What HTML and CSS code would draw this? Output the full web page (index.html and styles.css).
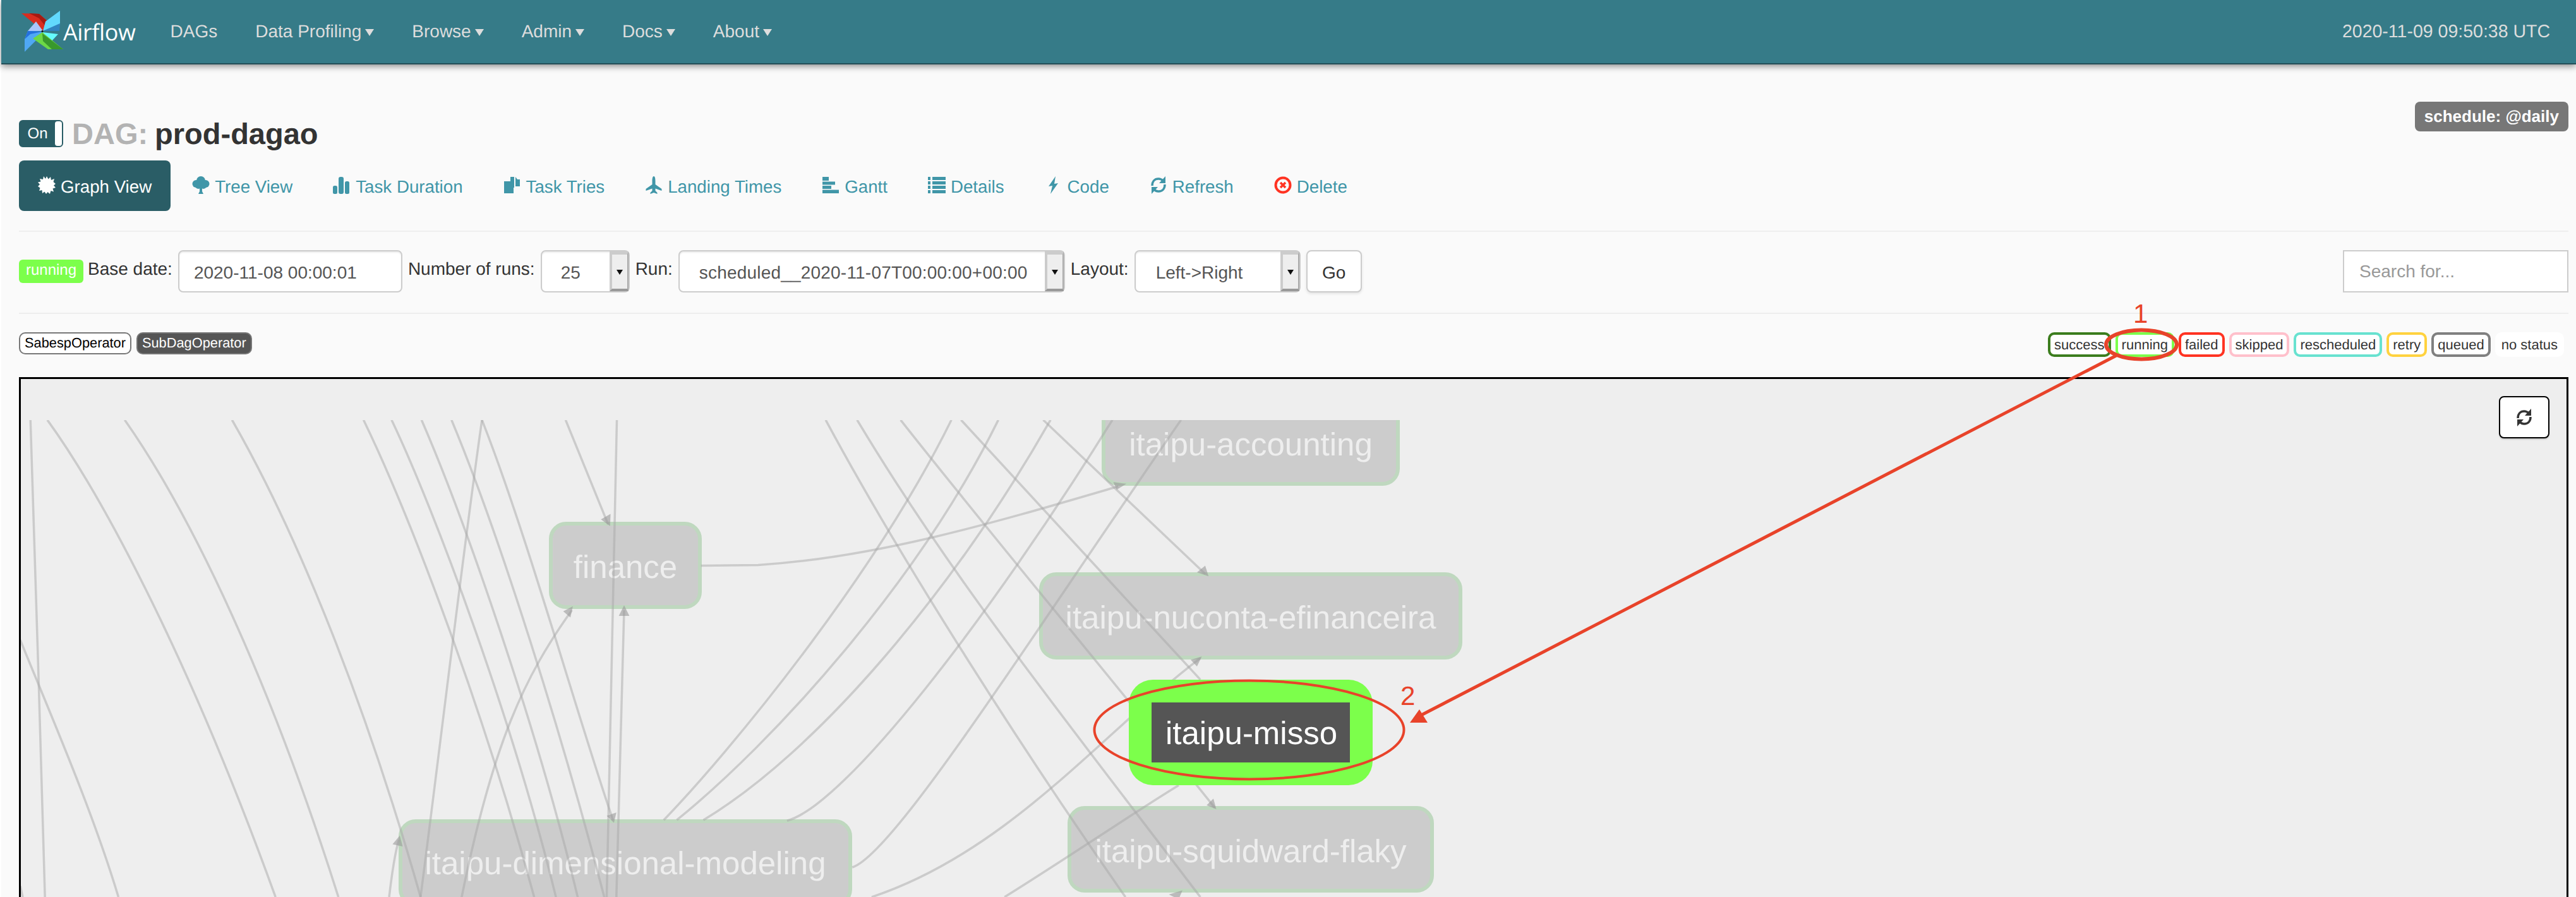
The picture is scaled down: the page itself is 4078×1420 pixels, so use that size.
FILE: index.html
```html
<!DOCTYPE html>
<html lang="en">
<head>
    <meta charset="UTF-8">
    <title>Airflow - prod-dagao</title>
    <link rel="stylesheet" href="styles.css">
</head>
<body>

    <div class="navbar">
        <a class="brand">
            <svg class="logo" viewBox="30 15 72 72">
                <polygon class="b-red" points="32,22 60,23 81,41 66,50"/>
                <polygon class="b-red-dark" points="44,22 60,23 78,39 72,45 60,30"/>
                <polygon class="b-lav" points="55,35 66,50 42,50"/>
                <polygon class="b-blue" points="66,51 42,50 37,63 37,83 55,65"/>
                <polygon class="b-blue-dark" points="65,51 42,50 37,63 46,55"/>
                <polygon class="b-cyan" points="93,18 93,40 66,50 70,35"/>
                <polygon class="b-teal" points="66,50 93,38 92,50 80,50"/>
                <polygon class="b-aqua" points="65,52 90,55 78,68"/>
                <polygon class="b-green" points="50,62 65,52 98,79 74,79"/>
                <polygon class="b-green-dark" points="65,54 98,79 80,79 66,66"/>
                <circle class="b-hub" cx="65" cy="50.500" r="1.500"/>
            </svg>
            <span class="brand-name">Airflow</span>
        </a>
        <ul class="nav-links">
            <li>DAGs</li>
            <li>Data Profiling<span class="caret"></span></li>
            <li>Browse<span class="caret"></span></li>
            <li>Admin<span class="caret"></span></li>
            <li>Docs<span class="caret"></span></li>
            <li>About<span class="caret"></span></li>
        </ul>
        <span class="nav-time">2020-11-09 09:50:38 UTC</span>
    </div>

    <div class="container">
        <div class="title-row">
            <div class="title">
                <span class="toggle"><span class="toggle-on">On</span><span class="toggle-knob"></span></span>
                <span class="title-dag">DAG:</span>
                <span class="title-name">prod-dagao</span>
            </div>
            <span class="schedule">schedule: @daily</span>
        </div>

        <ul class="tabs">
            <li class="tab active">
                <svg class="icon" viewBox="0 0 28 28"><polygon points="14,0 16.500,4.500 20,1 21,6 26,4 24.500,9 28,12 25,14.500 28,18 23.500,19.500 25,24.500 20.500,23 19,28 15.500,25 13,28 10.500,24.500 7,27 6.500,22 2,23 3.500,18.500 0,16 3,13 0,9.500 4.500,8.500 3,4 8,5 9,0 12,4"/></svg>
                Graph View
            </li>
            <li class="tab">
                <svg class="icon" viewBox="0 0 28 28"><circle cx="14" cy="7" r="7"/><circle cx="6.500" cy="12" r="6"/><circle cx="21.500" cy="12" r="6"/><circle cx="10" cy="15" r="5"/><circle cx="18" cy="15" r="5"/><path d="M12 16h4v8l2 4h-8l2-4z"/></svg>
                Tree View
            </li>
            <li class="tab">
                <svg class="icon" viewBox="0 0 28 28"><rect x="0" y="15" width="7" height="13" rx="2.500"/><rect x="9" y="1" width="8" height="27" rx="3"/><rect x="19" y="8" width="7" height="20" rx="2.500"/></svg>
                Task Duration
            </li>
            <li class="tab">
                <svg class="icon" viewBox="0 0 28 28"><path d="M1 8h10V1h6v17h-1v9H1zM19 1l3 4h4v11h-7z"/><path class="icon-cut" d="M17 18h2v2h-2z"/></svg>
                Task Tries
            </li>
            <li class="tab">
                <svg class="icon" viewBox="0 0 28 28"><path d="M14 0c2 0 2.500 4 2.500 8v5l10 7v3l-10-3.500V23l3 3v2l-5.500-2-5.500 2v-2l3-3v-3.500L1.500 23v-3l10-7V8c0-4 .5-8 2.500-8z"/></svg>
                Landing Times
            </li>
            <li class="tab">
                <svg class="icon" viewBox="0 0 28 28"><path d="M1 1h10v6H1zM1 8.500h20v5H1zM1 15h14v5H1zM1 21.500h26V27H1z"/></svg>
                Gantt
            </li>
            <li class="tab">
                <svg class="icon" viewBox="0 0 28 28"><path d="M0 1h4v5H0zM7 1h21v5H7zM0 8h4v5H0zM7 8h21v5H7zM0 15h4v5H0zM7 15h21v5H7zM0 22h4v5H0zM7 22h21v5H7z"/></svg>
                Details
            </li>
            <li class="tab">
                <svg class="icon" viewBox="0 0 28 28"><path d="M17 0l-2 12 6-1-12 17 3-13-6 1z"/></svg>
                Code
            </li>
            <li class="tab">
                <svg class="icon" viewBox="0 0 28 28"><path class="icon-line" d="M4 15c0-7 4-11 10-11 3 0 5 1 7 3M24 13c0 7-4 11-10 11-3 0-5-1-7-3"/><path d="M25 0v11h-10zM3 28V17h10z"/></svg>
                Refresh
            </li>
            <li class="tab">
                <svg class="icon icon-red" viewBox="0 0 28 28"><circle class="icon-ring" cx="14" cy="14" r="11.500"/><path class="icon-x" d="M10 10l8 8M18 10l-8 8"/></svg>
                Delete
            </li>
        </ul>

        <hr class="rule">

        <form class="run-form">
            <span class="state-badge">running</span>
            <label class="field-label">Base date:</label>
            <input class="field field-date" type="text" value="2020-11-08 00:00:01">
            <label class="field-label">Number of runs:</label>
            <div class="field select select-runs"><span class="select-val">25</span><span class="select-btn"></span></div>
            <label class="field-label">Run:</label>
            <div class="field select select-run"><span class="select-val">scheduled__2020-11-07T00:00:00+00:00</span><span class="select-btn"></span></div>
            <label class="field-label">Layout:</label>
            <div class="field select select-layout"><span class="select-val">Left-&gt;Right</span><span class="select-btn"></span></div>
            <button class="go-btn" type="button">Go</button>
            <input class="search" type="text" placeholder="Search for...">
        </form>

        <hr class="rule">

        <div class="legend-row">
            <div class="ops">
                <span class="op">SabespOperator</span>
                <span class="op op-dark">SubDagOperator</span>
            </div>
            <div class="states">
                <span class="st st-success">success</span>
                <span class="st st-running">running</span>
                <span class="st st-failed">failed</span>
                <span class="st st-skipped">skipped</span>
                <span class="st st-rescheduled">rescheduled</span>
                <span class="st st-retry">retry</span>
                <span class="st st-queued">queued</span>
                <span class="st st-none">no status</span>
            </div>
        </div>

        <div class="graph-box">
            <button class="graph-refresh" type="button">
                <svg class="icon-dark" viewBox="0 0 28 28"><path class="icon-line" d="M4 15c0-7 4-11 10-11 3 0 5 1 7 3M24 13c0 7-4 11-10 11-3 0-5-1-7-3"/><path d="M25 0v11h-10zM3 28V17h10z"/></svg>
            </button>
            <svg class="graph" viewBox="33 665 4030 755">
                <!-- task nodes -->
                <rect class="node" x="872" y="829" width="236" height="132" rx="24"/>
                <text class="node-label" x="990" y="915">finance</text>
                <rect class="node" x="634" y="1300" width="712" height="132" rx="24"/>
                <text class="node-label" x="990" y="1384">itaipu-dimensional-modeling</text>
                <rect class="node" x="1747" y="634" width="466" height="132" rx="24"/>
                <text class="node-label" x="1980" y="721">itaipu-accounting</text>
                <rect class="node" x="1648" y="909" width="664" height="132" rx="24"/>
                <text class="node-label" x="1980" y="995">itaipu-nuconta-efinanceira</text>
                <rect class="node" x="1693" y="1279" width="574" height="131" rx="24"/>
                <text class="node-label" x="1980" y="1365">itaipu-squidward-flaky</text>

                <!-- edges, left half -->
                <g transform="translate(0 600) scale(.7653 .523)">
                    <path class="edge" d="M63 124L80 915 93 1568"/>
                    <path class="edge" d="M98 124C200 330 380 800 570 1568"/>
                    <path class="edge" d="M258 124C400 420 560 920 700 1568"/>
                    <path class="edge" d="M480 124C620 480 760 1000 870 1568"/>
                    <path class="edge" d="M752 124C850 420 1000 1000 1105 1568"/>
                    <path class="edge" d="M810 124C900 400 1060 1030 1150 1568"/>
                    <path class="edge" d="M872 124C960 420 1110 1050 1195 1568"/>
                    <path class="edge" d="M934 124C1030 460 1160 1060 1250 1568"/>
                    <path class="edge" d="M997 124C1090 470 1190 1000 1268 1335"/>
                    <path class="edge" d="M997 124C960 500 920 1000 870 1568"/>
                    <path class="edge" d="M1170 124L1258 440"/>
                    <path class="edge" d="M1276 124L1255 1568"/>
                    <path class="edge" d="M1291 700L1275 1568"/>
                    <path class="edge" d="M1183 700C1085 900 1020 1100 955 1568"/>
                    <path class="edge" d="M805 1568C812 1480 818 1430 825 1395"/>
                    <path class="edge" d="M42 790C100 1000 190 1300 245 1568"/>
                    <path class="edge" d="M42 1535L47 1568"/>
                    <polygon class="arrow" points="1262,445 1243,425 1263,408"/>
                    <polygon class="arrow" points="1291,685 1280,717 1302,717"/>
                    <polygon class="arrow" points="1185,688 1165,703 1180,722"/>
                    <polygon class="arrow" points="827,1382 812,1408 833,1415"/>
                    <polygon class="arrow" points="1270,1343 1255,1322 1275,1312"/>
                </g>

                <!-- edges, right half -->
                <g transform="translate(1200 600) scale(.7653 .523)">
                    <path class="edge" d="M-118 565L0 563C250 540 500 430 745 325"/>
                    <path class="edge" d="M-195 1335C-60 1130 240 600 400 124"/>
                    <path class="edge" d="M-168 1335C30 1100 330 620 497 124"/>
                    <path class="edge" d="M-113 1335C120 1130 400 650 605 124"/>
                    <path class="edge" d="M60 1337C180 1290 480 720 733 124"/>
                    <path class="edge" d="M195 1478C280 1440 560 790 875 124"/>
                    <path class="edge" d="M235 1568C520 1430 720 1060 915 845"/>
                    <path class="edge" d="M510 1568C650 1440 780 1310 870 1230"/>
                    <path class="edge" d="M140 124C300 560 560 1150 760 1568"/>
                    <path class="edge" d="M205 124C400 600 620 1000 915 1568"/>
                    <path class="edge" d="M295 124C470 450 700 850 945 1298"/>
                    <path class="edge" d="M420 124L915 910"/>
                    <path class="edge" d="M590 124L925 590"/>
                    <polygon class="arrow" points="762,317 735,312 742,335"/>
                    <polygon class="arrow" points="932,597 908,585 925,565"/>
                    <polygon class="arrow" points="918,840 895,850 908,870"/>
                    <polygon class="arrow" points="948,1302 928,1290 942,1270"/>
                    <polygon class="arrow" points="878,1548 850,1560 870,1575"/>
                </g>

                <!-- the running task sits on top of its edges -->
                <rect class="node-running" x="1787" y="1076" width="386" height="167" rx="38"/>
                <rect class="node-inner" x="1823" y="1112" width="314" height="95"/>
                <text class="node-label node-label-on" x="1981" y="1178">itaipu-misso</text>
            </svg>
        </div>
    </div>

    <!-- red annotations drawn over the screenshot -->
    <svg class="marks" viewBox="0 0 4078 1420">
        <ellipse class="mark-ring" cx="3390" cy="545.500" rx="56" ry="23"/>
        <ellipse class="mark-ring mark-ring-thin" cx="1977.500" cy="1155.500" rx="245" ry="78"/>
        <path class="mark-line" d="M3350 563L2250 1132"/>
        <polygon class="mark-head" points="2232,1144 2247,1123 2260,1144"/>
        <text class="mark-num" x="3377" y="511">1</text>
        <text class="mark-num" x="2217" y="1116">2</text>
    </svg>

</body>
</html>
```

FILE: styles.css
```css
html, body {
    height: 1420px;
    margin: 0;
    overflow: hidden;
}
body {
    position: relative;
    padding: 0 0 0 2px;
    box-sizing: border-box;
    background: #fff;
    font-family: "Liberation Sans", Arial, sans-serif;
    font-size: 28px;
    color: #333;
    text-rendering: geometricPrecision;
}
ul {
    list-style: none;
    margin: 0;
    padding: 0;
}

/* navbar */
.navbar {
    display: flex;
    align-items: center;
    height: 100px;
    background: #367b88;
    border-bottom: 2px solid #234f58;
    box-shadow: 0 3px 10px rgba(0, 0, 0, 0.45);
    position: relative;
}
.brand {
    display: flex;
    align-items: center;
    margin-left: 30px;
}
.logo {
    width: 72px;
    height: 72px;
}
.b-red { fill: #d92d1f; }
.b-red-dark { fill: #a51a12; }
.b-lav { fill: #a9c6fb; }
.b-blue { fill: #4fa8f4; }
.b-blue-dark { fill: #2470de; }
.b-cyan { fill: #62d9fd; }
.b-teal { fill: #3184bf; }
.b-aqua { fill: #66fbfd; }
.b-green { fill: #6cd846; }
.b-green-dark { fill: #39982c; }
.b-hub { fill: #111; }
.brand-name {
    font-family: "Open Sans", sans-serif;
    font-size: 36px;
    letter-spacing: -0.4px;
    color: #fff;
    margin-left: -4px;
}
.nav-links {
    display: flex;
    margin-left: 25px;
}
.nav-links li {
    padding: 0 30px;
    color: #ddd;
    white-space: nowrap;
}
.caret {
    display: inline-block;
    margin-left: 6px;
    vertical-align: middle;
    border-top: 11px solid #ddd;
    border-left: 7px solid transparent;
    border-right: 7px solid transparent;
}
.nav-time {
    margin-left: auto;
    margin-right: 41px;
    font-size: 28.500px;
    color: #ddd;
}

/* page */
.container {
    padding: 0 12px 0 28px;
    background: #fafafa;
    height: 1318px;
}
.title-row {
    display: flex;
    justify-content: space-between;
    align-items: flex-start;
    padding-top: 59px;
    margin-bottom: 21px;
}
.title {
    display: flex;
    align-items: center;
    height: 43px;
    margin-top: 29px;
    font-size: 47px;
    font-weight: bold;
}
.toggle {
    display: flex;
    width: 70px;
    height: 43px;
    box-sizing: border-box;
    background: #2a5d66;
    border: 2px solid #2a5d66;
    border-radius: 6px;
    margin-right: 14px;
    font-size: 24px;
    font-weight: normal;
    color: #fff;
}
.toggle-on {
    width: 55px;
    text-align: center;
    line-height: 40px;
}
.toggle-knob {
    flex: 1;
    background: #fff;
    border-radius: 4px;
}
.title-dag {
    color: #b3b3b3;
    margin-right: 11px;
}
.title-name {
    color: #333;
}
.schedule {
    background: #777;
    color: #fff;
    font-size: 26px;
    font-weight: bold;
    border-radius: 8px;
    height: 47px;
    line-height: 46px;
    padding: 0 15px;
}

/* tabs */
.tabs {
    display: flex;
    gap: 4px;
    height: 80px;
}
.tab {
    display: flex;
    align-items: center;
    gap: 8px;
    padding: 4px 30px 0;
    font-size: 27.700px;
    color: #4096a8;
    border-radius: 8px;
    white-space: nowrap;
}
.tab.active {
    background: #2a5d66;
    color: #fff;
}
.icon {
    width: 28px;
    height: 28px;
    fill: currentColor;
    margin-top: -6px;
}
.icon-cut { fill: #fafafa; }
.icon-line {
    fill: none;
    stroke: currentColor;
    stroke-width: 3.500;
}
.icon-ring {
    fill: none;
    stroke: #ff3322;
    stroke-width: 4;
}
.icon-x {
    fill: none;
    stroke: #ff3322;
    stroke-width: 3.500;
}
.rule {
    border: 0;
    height: 2px;
    background: #eee;
    margin: 0;
}
.tabs + .rule {
    margin-top: 31px;
}

/* run form */
.run-form {
    display: flex;
    align-items: center;
    gap: 9px;
    height: 67px;
    margin: 29px 0 32px;
}
.state-badge {
    box-sizing: border-box;
    width: 102px;
    height: 37px;
    background: #7cff4b;
    color: #fff;
    font-size: 24px;
    line-height: 34px;
    text-align: center;
    border-radius: 6px;
    margin-right: -2px;
}
.field-label {
    margin-top: -8px;
    color: #333;
}
.field {
    box-sizing: border-box;
    height: 67px;
    background: #fff;
    border: 2px solid #ccc;
    border-radius: 8px;
    font-family: inherit;
    font-size: 28px;
    color: #555;
    box-shadow: inset 0 2px 2px rgba(0, 0, 0, 0.075);
}
.field-date {
    width: 355px;
    padding: 4px 0 0 23px;
}
.select {
    display: flex;
    justify-content: space-between;
}
.select-val {
    line-height: 68px;
}
.select-runs { width: 141px; padding-left: 30px; }
.select-run { width: 612px; padding-left: 31px; letter-spacing: 0.200px; }
.select-layout { width: 263px; padding-left: 32px; }
.select-btn {
    position: relative;
    width: 30px;
    box-sizing: border-box;
    background: #eee;
    border-left: 4px solid #ccc;
    border-top: 5px solid #ccc;
    border-bottom: 4px solid #999;
    border-right: 2px solid #aaa;
}
.select-btn::after {
    content: "";
    position: absolute;
    left: 7px;
    top: 24px;
    border-top: 8px solid #111;
    border-left: 5px solid transparent;
    border-right: 5px solid transparent;
}
.go-btn {
    width: 88px;
    height: 67px;
    background: #fff;
    border: 2px solid #ccc;
    border-radius: 8px;
    font-family: inherit;
    font-size: 28px;
    color: #333;
    box-shadow: 0 2px 4px rgba(0, 0, 0, 0.1);
    padding: 4px 0 0;
}
.search {
    box-sizing: border-box;
    margin-left: auto;
    width: 357px;
    height: 67px;
    border: 2px solid #ccc;
    background: #fff;
    padding: 0 24px;
    font-family: inherit;
    font-size: 28px;
}
.search::placeholder {
    color: #999;
}

/* operators and states */
.legend-row {
    display: flex;
    justify-content: space-between;
    align-items: flex-start;
    height: 39px;
    margin: 29px 0 32px;
}
.ops {
    display: flex;
    gap: 8px;
}
.op {
    box-sizing: border-box;
    height: 35px;
    line-height: 30px;
    padding: 0 7px;
    font-size: 21.800px;
    color: #000;
    background: #fff;
    border: 2px solid #777;
    border-radius: 10px;
}
.op-dark {
    background: #555;
    color: #fff;
}
.states {
    display: flex;
    gap: 7px;
    margin-right: 7px;
}
.st {
    box-sizing: border-box;
    height: 39px;
    line-height: 31px;
    padding: 0 6px;
    font-size: 22px;
    color: #333;
    background: #fff;
    border: 4px solid #fff;
    border-radius: 10px;
}
.st-success { border-color: #3c7d1e; }
.st-running { border-color: #7cff4b; }
.st-failed { border-color: #ff3322; }
.st-skipped { border-color: #ffc0cb; }
.st-rescheduled { border-color: #68e2d0; }
.st-retry { border-color: #ffd23f; }
.st-queued { border-color: #808080; }

/* graph */
.graph-box {
    position: relative;
    box-sizing: border-box;
    height: 823px;
    background: #eee;
    border: 3px solid #000;
    border-bottom: 0;
    overflow: hidden;
}
.graph {
    position: absolute;
    left: 0;
    top: 65px;
    width: 4030px;
    height: 755px;
}
.graph-refresh {
    position: absolute;
    z-index: 1;
    top: 27px;
    right: 27px;
    box-sizing: border-box;
    width: 80px;
    height: 67px;
    padding: 0;
    background: #fff;
    border: 2px solid #000;
    border-radius: 8px;
    box-shadow: 0 2px 2px rgba(0, 0, 0, 0.15);
    color: #333;
}
.icon-dark {
    width: 28px;
    height: 28px;
    fill: #333;
    display: block;
    margin: 0 auto;
}
.node {
    fill: #ccc;
    stroke: #bfd8bf;
    stroke-width: 6;
}
.node-label {
    fill: #eee;
    font-size: 51px;
    text-anchor: middle;
}
.node-label-on {
    fill: #fff;
}
.node-running {
    fill: #7cff4b;
}
.node-inner {
    fill: #555;
}
.edge {
    fill: none;
    stroke: #a8a8a8;
    stroke-opacity: 0.5;
    stroke-width: 3.500px;
    vector-effect: non-scaling-stroke;
}
.arrow {
    fill: #999;
    fill-opacity: 0.6;
}

/* annotations */
.marks {
    position: absolute;
    left: 0;
    top: 0;
    width: 4078px;
    height: 1420px;
    pointer-events: none;
}
.mark-ring {
    fill: none;
    stroke: #e8432a;
    stroke-width: 6;
}
.mark-ring-thin {
    stroke-width: 4;
}
.mark-line {
    fill: none;
    stroke: #e8432a;
    stroke-width: 5;
}
.mark-head {
    fill: #e8432a;
}
.mark-num {
    fill: #e8432a;
    font-size: 42px;
}
```
